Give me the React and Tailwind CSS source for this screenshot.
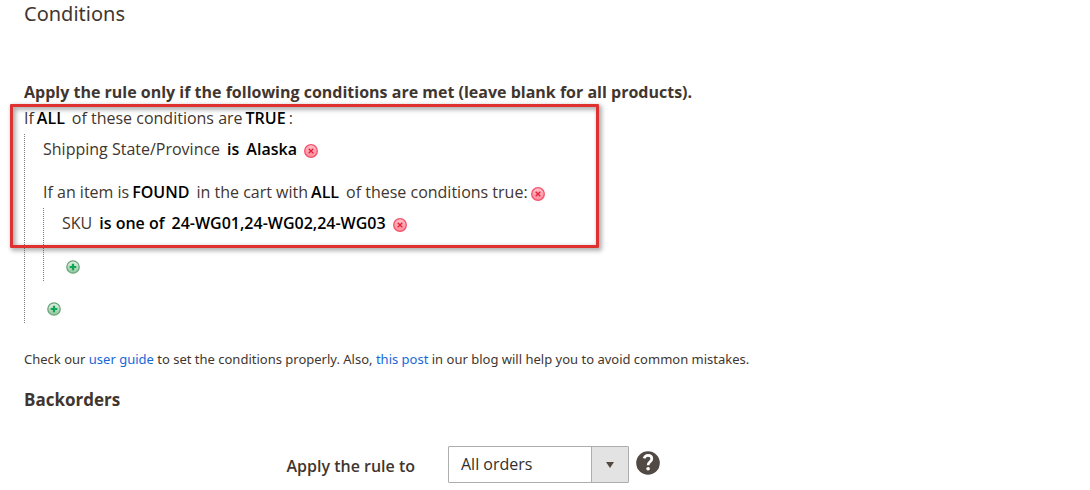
import React, { useState } from 'react';

function RemoveIcon() {
  return (
    <svg viewBox="0 0 14 14" className="h-3.5 w-3.5" aria-hidden="true">
      <defs>
        <linearGradient id="removeFill" x1="0" y1="0" x2="0" y2="1">
          <stop offset="0" stopColor="#ffc4cc" />
          <stop offset="0.5" stopColor="#ffa3ae" />
          <stop offset="1" stopColor="#ff8c9c" />
        </linearGradient>
      </defs>
      <circle cx="7" cy="7" r="6.3" fill="url(#removeFill)" stroke="#f4506a" strokeWidth="1.3" />
      <path d="M4.7 4.7l4.6 4.6M9.3 4.7L4.7 9.3" stroke="#e3203c" strokeWidth="1.3" />
    </svg>
  );
}

function AddIcon() {
  return (
    <svg viewBox="0 0 14 14" className="h-3.5 w-3.5" aria-hidden="true">
      <defs>
        <linearGradient id="addFill" x1="0" y1="0" x2="0" y2="1">
          <stop offset="0" stopColor="#e3f0e5" />
          <stop offset="0.5" stopColor="#bcdcc2" />
          <stop offset="1" stopColor="#8cc498" />
        </linearGradient>
      </defs>
      <circle cx="7" cy="7" r="6.2" fill="url(#addFill)" stroke="#6ba479" strokeWidth="1.3" />
      <path d="M7 3.7v6.6M3.7 7h6.6" stroke="#0fa557" strokeWidth="2.2" />
    </svg>
  );
}

function Param({ children }) {
  return <button type="button" className="font-semibold text-black">{children}</button>;
}

function RemoveButton() {
  return (
    <button type="button" aria-label="Remove" className="pt-1">
      <RemoveIcon />
    </button>
  );
}

function AddButton() {
  return (
    <button type="button" aria-label="Add" className="flex h-[22px] items-center pt-0.5 pl-1">
      <AddIcon />
    </button>
  );
}

export default function App() {
  const [applyTo, setApplyTo] = useState('all');

  return (
    <main className="px-6 pb-2 font-['Open_Sans',sans-serif] text-[#41362f]">
      <h2 className="pt-0.5 font-['Noto_Sans',sans-serif] text-xl leading-6 font-normal">Conditions</h2>

      <section className="relative mt-[54px]">
        <h3 className="text-base leading-6 font-bold">
          Apply the rule only if the following conditions are met (leave blank for all products).
        </h3>

        <div className="relative mt-[3px] text-base leading-[22px]">
          <div className="pointer-events-none absolute -top-[3px] -left-3.5 h-36 w-[589px] rounded-[1px] border-3 border-[#e03131] shadow-[2px_2px_4px_1px_rgba(0,0,0,0.3),inset_2px_2px_4px_1px_rgba(0,0,0,0.3)]" />

          <p className="flex items-center gap-[3px]">
            If <Param>ALL</Param>
            <span className="pl-1">of these conditions are</span>
            <Param>TRUE</Param> :
          </p>

          <ul className="mt-[5px] border-l border-dotted border-[#808080] py-1 pl-[18px]">
            <li className="mb-[21px] flex items-center gap-[7px]">
              Shipping State/Province <Param>is</Param> <Param>Alaska</Param>
              <RemoveButton />
            </li>
            <li className="mb-4">
              <div className="flex items-center gap-[3px]">
                If an item is <Param>FOUND</Param>
                <span className="pl-1">in the cart with</span>
                <Param>ALL</Param>
                <span className="pl-1">of these conditions true:</span>
                <RemoveButton />
              </div>
              <ul className="mt-[5px] border-l border-dotted border-[#808080] py-1 pl-[18px]">
                <li className="mb-[21px] flex items-center gap-[7px]">
                  SKU <Param>is one of</Param> <Param>24-WG01,24-WG02,24-WG03</Param>
                  <RemoveButton />
                </li>
                <li><AddButton /></li>
              </ul>
            </li>
            <li><AddButton /></li>
          </ul>
        </div>

        <p className="mt-[26px] font-['Noto_Sans',sans-serif] text-[13px] leading-5">
          Check our <a href="#guide" className="text-[#1668d9]">user guide</a> to set the conditions properly. Also,{' '}
          <a href="#post" className="text-[#1668d9]">this post</a> in our blog will help you to avoid common mistakes.
        </p>
      </section>

      <section className="mt-[19px]">
        <h3 className="text-[17px] leading-6 font-bold">Backorders</h3>

        <div className="mt-[34px] flex items-center">
          <label htmlFor="apply-to" className="w-[391px] pt-0.5 text-right text-base leading-6 font-semibold">
            Apply the rule to
          </label>
          <div className="relative ml-[33px] flex">
            <select
              id="apply-to"
              value={applyTo}
              onChange={e => setApplyTo(e.target.value)}
              className="h-[37px] w-[181px] appearance-none rounded-[1px] border border-[#adadad] bg-white pr-10 pb-0.5 pl-3 text-base text-[#303030]"
            >
              <option value="all">All orders</option>
              <option value="backorders">Backorders only</option>
              <option value="none">Non backorders only</option>
            </select>
            <span className="pointer-events-none absolute inset-y-px right-px flex w-[37px] items-center justify-center border-l border-[#adadad] bg-[#e3e3e3]">
              <svg viewBox="0 0 10 6" className="h-1.5 w-2.5" aria-hidden="true">
                <path d="M1 0h8L5 6z" fill="#514943" />
              </svg>
            </span>
          </div>
          <button type="button" aria-label="Help" className="mb-1 ml-[7px]">
            <svg viewBox="0 0 24 24" className="h-6 w-6" aria-hidden="true">
              <circle cx="12" cy="12" r="11.8" fill="#514943" />
              <path d="M8.1 7.4C8.8 5.4 10.2 4.4 12 4.4c2.2 0 3.8 1.3 3.8 3.3 0 3.1-3.7 3.2-3.7 6.6" fill="none" stroke="#fff" strokeWidth="2.7" />
              <circle cx="12.1" cy="17.8" r="1.8" fill="#fff" />
            </svg>
          </button>
        </div>
      </section>
    </main>
  );
}
